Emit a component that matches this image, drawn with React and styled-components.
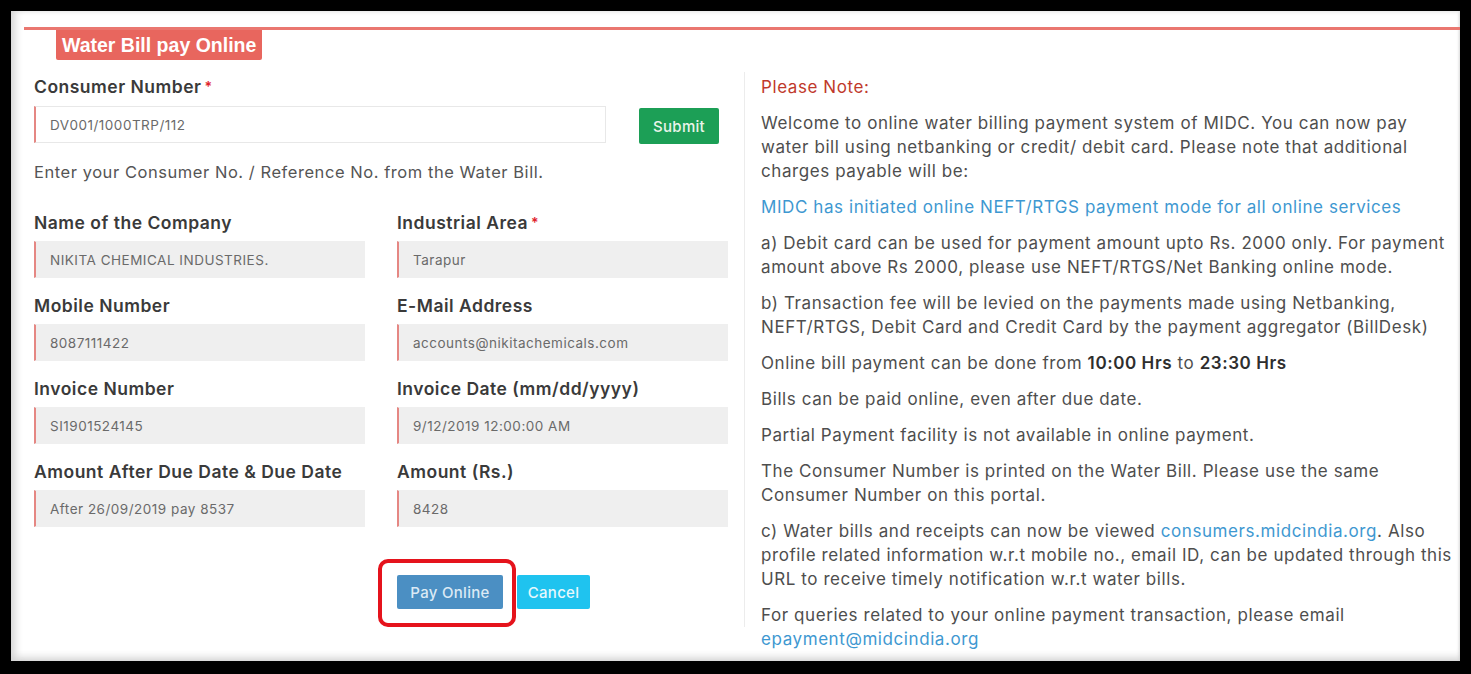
import styled, { createGlobalStyle } from "styled-components";

const Global = createGlobalStyle`
  html, body { margin: 0; padding: 0; background: #000; }
  body { font-family: Inter, "Open Sans", sans-serif; color: #444; }
  * { box-sizing: border-box; }
`;

const Page = styled.div`
  width: 1471px;
  height: 674px;
  background: #000;
  padding: 11px 11px 12px 11px;
`;

const Panel = styled.div`
  width: 1449px;
  height: 650px;
  background: #fff;
  box-shadow: inset 10px 0 8px -6px #d4d4d4, inset 0 -9px 8px -6px #cfcfcf,
    inset 0 4px 4px -3px #e6e6e6, inset -3px 0 3px -2px #d8d8d8;
  padding: 16px 0 0 13px;
`;

const Header = styled.div`
  border-top: 3px solid #ea7770;
  padding-left: 32px;
  height: 33px;
`;

const Tag = styled.div`
  display: inline-block;
  background: #e8665e;
  color: #fff;
  font-family: "Liberation Sans", Arial, sans-serif;
  font-weight: 700;
  font-size: 19.5px;
  line-height: 30px;
  height: 30px;
  padding: 0 6px;
  border-radius: 0 0 2px 2px;
`;

const Body = styled.div`
  display: grid;
  grid-template-columns: 710px 1px 1fr;
  padding-left: 10px;
`;

const LeftCol = styled.div`
  padding-right: 15px;
  padding-top: 15px;
`;

const Divider = styled.div`
  background: #ececec;
  margin-top: 12px;
  height: 555px;
`;

const RightCol = styled.div`
  padding: 15px 0 0 16px;
  font-size: 17px;
  line-height: 24px;
  color: #4e4e4e;
  letter-spacing: 0.58px;
  white-space: nowrap;
`;

const Label = styled.div`
  font-weight: 600;
  font-size: 17.5px;
  line-height: 24px;
  color: #3a3a3a;
  letter-spacing: 0.5px;
  margin-bottom: ${(p) => p.gap}px;
`;

const Star = styled.span`
  color: #e0222a;
  margin-left: 3px;
  font-size: 14px;
  vertical-align: top;
`;

const Row = styled.div`
  display: flex;
  align-items: flex-start;
  gap: 33px;
`;

const Input = styled.div`
  width: ${(p) => p.w}px;
  height: 37px;
  display: flex;
  align-items: center;
  padding-left: 14px;
  font-size: 13.5px;
  color: #6a6a6a;
  letter-spacing: 0.5px;
  background: ${(p) => (p.readOnly ? "#efefef" : "#fff")};
  border: 1px solid ${(p) => (p.readOnly ? "#efefef" : "#e8e8e8")};
  border-left: 2px solid #e58783;
`;

const Button = styled.div`
  display: inline-flex;
  align-items: center;
  justify-content: center;
  height: ${(p) => p.h || 34}px;
  width: ${(p) => p.w}px;
  margin-top: ${(p) => p.mt || 0}px;
  background: ${(p) => p.bg};
  color: ${(p) => p.fg || "#eaf4ea"};
  font-size: 15px;
  font-weight: 500;
  letter-spacing: 0.3px;
  border-radius: 2px;
`;

const Help = styled.div`
  font-size: 16.5px;
  line-height: 24px;
  color: #555;
  letter-spacing: 0.55px;
  margin: 16px 0 27px;
`;

const Grid = styled.div`
  display: grid;
  grid-template-columns: 331px 331px;
  column-gap: 32px;
  row-gap: 16px;
`;

const Field = styled.div``;

const Actions = styled.div`
  display: flex;
  align-items: center;
  gap: 14px;
  margin-top: 48px;
  padding-left: 363px;
`;

const Highlight = styled.div`
  border: 4px solid #e5131c;
  border-radius: 10px;
  padding: 12px 9px 14px 15px;
  margin: -16px -13px -18px -19px;
`;

const Note = styled.p`
  margin: 0 0 12px;
  color: ${(p) => p.color || "inherit"};
`;

const Link = styled.span`
  color: #3e98d1;
`;

const Strong = styled.b`
  color: #2e2e2e;
  font-weight: 600;
`;

const fields = [
  ["Name of the Company", "NIKITA CHEMICAL INDUSTRIES.", false],
  ["Industrial Area", "Tarapur", true],
  ["Mobile Number", "8087111422", false],
  ["E-Mail Address", "accounts@nikitachemicals.com", false],
  ["Invoice Number", "SI1901524145", false],
  ["Invoice Date (mm/dd/yyyy)", "9/12/2019 12:00:00 AM", false],
  ["Amount After Due Date & Due Date", "After 26/09/2019 pay 8537", false],
  ["Amount (Rs.)", "8428", false],
];

export default function App() {
  return (
    <Page>
      <Global />
      <Panel>
        <Header>
          <Tag>Water Bill pay Online</Tag>
        </Header>
        <Body>
          <LeftCol>
            <Label gap={7}>
              Consumer Number<Star>*</Star>
            </Label>
            <Row>
              <Input w={572}>DV001/1000TRP/112</Input>
              <Button bg="#1c9f56" h={36} w={80} mt={2}>
                Submit
              </Button>
            </Row>
            <Help>Enter your Consumer No. / Reference No. from the Water Bill.</Help>
            <Grid>
              {fields.map(([label, value, req]) => (
                <Field key={label}>
                  <Label gap={6}>
                    {label}
                    {req && <Star>*</Star>}
                  </Label>
                  <Input w={331} readOnly>
                    {value}
                  </Input>
                </Field>
              ))}
            </Grid>
            <Actions>
              <Highlight>
                <Button bg="#4b8fc3" fg="#dceaf5" w={106}>
                  Pay Online
                </Button>
              </Highlight>
              <Button bg="#1fc3ef" fg="#e6f8fd" w={73}>
                Cancel
              </Button>
            </Actions>
          </LeftCol>
          <Divider />
          <RightCol>
            <Note color="#c0392b">Please Note:</Note>
            <Note>
              Welcome to online water billing payment system of MIDC. You can now pay
              <br />
              water bill using netbanking or credit/ debit card. Please note that additional
              <br />
              charges payable will be:
            </Note>
            <Note color="#3e98d1">
              MIDC has initiated online NEFT/RTGS payment mode for all online services
            </Note>
            <Note>
              a) Debit card can be used for payment amount upto Rs. 2000 only. For payment
              <br />
              amount above Rs 2000, please use NEFT/RTGS/Net Banking online mode.
            </Note>
            <Note>
              b) Transaction fee will be levied on the payments made using Netbanking,
              <br />
              NEFT/RTGS, Debit Card and Credit Card by the payment aggregator (BillDesk)
            </Note>
            <Note>
              Online bill payment can be done from <Strong>10:00 Hrs</Strong> to{" "}
              <Strong>23:30 Hrs</Strong>
            </Note>
            <Note>Bills can be paid online, even after due date.</Note>
            <Note>Partial Payment facility is not available in online payment.</Note>
            <Note>
              The Consumer Number is printed on the Water Bill. Please use the same
              <br />
              Consumer Number on this portal.
            </Note>
            <Note>
              c) Water bills and receipts can now be viewed <Link>consumers.midcindia.org</Link>.
              Also
              <br />
              profile related information w.r.t mobile no., email ID, can be updated through this
              <br />
              URL to receive timely notification w.r.t water bills.
            </Note>
            <Note>
              For queries related to your online payment transaction, please email
              <br />
              <Link>epayment@midcindia.org</Link>
            </Note>
          </RightCol>
        </Body>
      </Panel>
    </Page>
  );
}
